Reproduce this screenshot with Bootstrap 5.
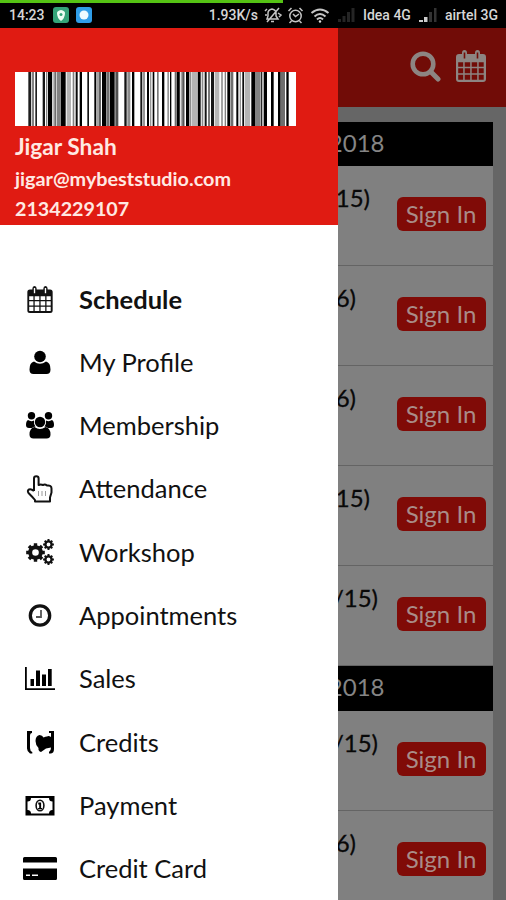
<!DOCTYPE html>
<html lang="en">
<head>
<meta charset="utf-8">
<meta name="viewport" content="width=device-width, initial-scale=1">
<title>Schedule</title>
<link href="https://cdn.jsdelivr.net/npm/bootstrap@5.3.0/dist/css/bootstrap.min.css" rel="stylesheet">
<style>
body{font-family:Lato,sans-serif;background:#666;color:#000}
.screen{width:506px;height:900px}
.status{height:28px;padding:2px 8px 3px 9px;font:500 14px/20px Roboto,sans-serif;color:#d6d6d6;border-top:3px solid #000;border-image:linear-gradient(90deg,#55c314 283px,#000 283px) 1;background:#000;white-space:nowrap}
.status svg{flex-shrink:0}
.drawer{width:338px}
.profile{height:197px;background:#e01b12;padding:44px 15px 0;color:#ffe9e2;font-weight:700}
.profile svg{display:block}
.person{font-size:22.7px;line-height:30px;margin-top:6px}
.mail{font-size:19.8px;line-height:31px;margin-top:1px}
.phone{font-size:19.7px;line-height:30px}
.entries{padding-top:42px}
.entry{height:63.3px;font-size:25.5px;color:#111}
.entry svg{width:40px;height:34px;margin:0 19.5px 0 19.5px}
.main-pane{width:168px}
.appbar{height:79px;background:#710c07;padding-right:20px;padding-bottom:3px;gap:15px}
.board{margin:15px 13px 0 0;height:778px}
.day{height:44.3px;background:#000;color:#858585;font-size:24px;padding-bottom:2px}
.slot{height:100px;background:#808080;border-bottom:1.5px solid #646464;padding:14px 7px 0 0}
.count{font-size:24px;line-height:35px;color:#080808;-webkit-text-stroke:.3px #080808}
.clip-start{display:flex;justify-content:flex-end;overflow:hidden;white-space:nowrap}
.w-day{width:46.5px}.w-a{width:32px}.w-b{width:18px}.w-c{width:40px}
.sign{width:89px;height:34px;margin-top:17px;padding:0 1px 1px 0;border:0;border-radius:6px;background:#800b07;color:#a98c88;font-size:24px;line-height:33px}
</style>
<script src="https://cdn.jsdelivr.net/npm/bootstrap@5.3.0/dist/js/bootstrap.bundle.min.js"></script>
</head>
<body>
<svg width="0" height="0" class="d-none">
<symbol id="cal" viewBox="0 0 30 32">
<path fill="currentColor" fill-rule="evenodd" d="M3 4h3V3q0-3 2.500-3T11 3v1h8V3q0-3 2.500-3T24 3v1h3q3 0 3 3v22q0 3-3 3H3q-3 0-3-3V7q0-3 3-3ZM2.200 12.200v4.500h5v-4.500Zm6.500 0v4.500h5.500v-4.500Zm7 0v4.500h5.500v-4.500Zm7 0v4.500h5v-4.500ZM2.200 18.200v5h5v-5Zm6.500 0v5h5.500v-5Zm7 0v5h5.500v-5Zm7 0v5h5v-5ZM2.200 24.700v5h5v-5Zm6.500 0v5h5.500v-5Zm7 0v5h5.500v-5Zm7 0v5h5v-5ZM7.700 2.500v6h1.600v-6Zm13 0v6h1.600v-6Z"/>
</symbol>
<symbol id="gear" viewBox="-10 -10 20 20">
<circle r="5.600" fill="none" stroke="currentColor" stroke-width="4.200"/>
<path stroke="currentColor" stroke-width="3.600" d="M0-9.800v4M0 5.800v4M-9.800 0h4M5.800 0h4M-6.900-6.900l3 3M3.900 3.900l3 3M-6.900 6.900l3-3M3.900-3.900l3-3"/>
</symbol>
</svg>
<div class="screen d-flex flex-column overflow-hidden">
  <div class="status d-flex align-items-center flex-shrink-0">
    <span>14:23</span>
    <svg class="ms-2" width="40" height="18" viewBox="0 0 40 18"><rect x="0" y="1" width="16" height="16" rx="3" fill="#35a479"/><path d="M8 4q4 1 4 3 0 5-4 8-4-3-4-8 0-2 4-3Z" fill="#effff4"/><circle cx="8" cy="8.500" r="1.500" fill="#35a479"/><rect x="23" y="1" width="16" height="16" rx="3" fill="#2f9de8"/><circle cx="31" cy="9" r="4.500" fill="#eefaff"/></svg>
    <span class="ms-auto">1.93K/s</span>
    <svg style="margin-left:6px" width="66" height="18" viewBox="0 0 66 18" fill="none" stroke="#c5c5c5" stroke-width="1.500"><path d="M3 13h11l-2-3V7q0-3-4-4-4 1-4 4v3Zm4 2.500h3M3 16 15 2M14 7l3 2-2 2M1 5l2-2M1 9h2"/><circle cx="31.500" cy="10" r="5.700"/><path d="m29 8 2.500 2.500L35 8M24.500 5l3-3m8 0 3 3m-11 10-2 2m10-2 2 2"/><g stroke-width="2"><path d="M47.500 7q8.500-7 17 0M50.500 10.500q5.500-5 11 0M53 13.500q3-3 6 0"/></g><circle cx="56" cy="15.500" r="1.200" fill="#ddd" stroke="none"/></svg>
    <svg class="ms-2" width="17" height="14" viewBox="0 0 17 14" fill="#252525"><path d="M0 14v-3h3v3Zm4.500 0V8h3v6ZM9 14V4h3v10Zm4.500 0V0h3v14Z"/></svg>
    <span class="ms-2">Idea 4G</span>
    <svg class="ms-2" width="18" height="14" viewBox="0 0 18 14"><path fill="#ccc" d="M0 14v-2h4v2Zm5 0V9h3.500v5Z"/><path fill="#333" d="M10 14V4h3v10Zm5 0V0h2.500v14Z"/></svg>
    <span class="ms-2">airtel 3G</span>
  </div>
  <div class="d-flex flex-grow-1">
    <aside class="drawer bg-white flex-shrink-0">
      <div class="profile">
        <svg id="barcode" width="281" height="54" viewBox="0 0 843 54" preserveAspectRatio="none"><rect width="843" height="54" fill="#fff"/></svg>
        <div class="person">Jigar Shah</div>
        <div class="mail">jigar@mybeststudio.com</div>
        <div class="phone">2134229107</div>
      </div>
      <nav class="entries">
        <div class="entry d-flex align-items-center fw-bold"><svg viewBox="0 0 40 34"><use href="#cal" x="7" y="4" width="26" height="27"/></svg>Schedule</div>
        <div class="entry d-flex align-items-center"><svg viewBox="0 0 40 34"><circle cx="20" cy="11.500" r="5.800"/><path d="M14 16.500q6 4.500 12 0 4.500 1 4.500 8 0 4.500-4 4.500h-13q-4 0-4-4.500 0-7 4.500-8Z"/></svg>My Profile</div>
        <div class="entry d-flex align-items-center"><svg viewBox="0 0 40 34"><circle cx="11.500" cy="7.800" r="3.700"/><circle cx="28.500" cy="7.800" r="3.700"/><path d="M8 12q3 2 6 .500-.500 4 1.500 6-2.500 0-3.500 1.500H9q-3 0-3-3 0-4 2-5ZM32 12q-3 2-6 .500.500 4-1.500 6 2.500 0 3.500 1.500h3q3 0 3-3 0-4-2-5Z"/><circle cx="20" cy="14" r="5.200"/><path d="M14.500 19q5.500 4 11 0 5 1 5 7.500 0 4-4 4h-13q-4 0-4-4 0-6.500 5-7.500Z"/></svg>Membership</div>
        <div class="entry d-flex align-items-center"><svg viewBox="0 0 40 34" fill="none" stroke="#111" stroke-width="2" stroke-linejoin="round"><path d="M14 19V6.500q0-2.200 2.300-2.200t2.300 2.200V13q2-1 4.400 0 2-1 4 .500 4.500-.500 4.500 3v4l-1.500 5v4H15v-1.500q-2-2.500-6.500-7-1.500-2.500.500-3.500t5 1.500"/><path stroke="#999" stroke-width="1" d="M18.500 19v5m3.500-5v5m3.500-5v5"/></svg>Attendance</div>
        <div class="entry d-flex align-items-center"><svg viewBox="0 0 40 34"><use href="#gear" x="6" y="8" width="19" height="19"/><use href="#gear" x="23" y="4" width="11" height="11"/><use href="#gear" x="23" y="19" width="11" height="11"/></svg>Workshop</div>
        <div class="entry d-flex align-items-center"><svg viewBox="0 0 40 34" fill="none"><circle cx="20" cy="17.500" r="9.700" stroke="#111" stroke-width="3.300"/><path d="M21 12v7h-5" stroke="#555" stroke-width="1.800"/></svg>Appointments</div>
        <div class="entry d-flex align-items-center"><svg viewBox="0 0 40 34"><path d="M5 6h1.800v21.200H35V29H5ZM10.500 18H14v7h-3.500Zm5.500-8.500h4V25h-4Zm6 4h4V25h-4Zm6-5.500h3.700v17H28Z"/></svg>Sales</div>
        <div class="entry d-flex align-items-center"><svg viewBox="0 0 40 34"><path d="M7 6h5v2q-2 0-2 3v12q0 3 2.300 4v1.500H10q-3-2-3-5ZM29 6h5v18q0 4-3 4.500h-2V27q2-1 2-4.500l-5 1-5 3.500q-3-1-2.500-4-3-3-3-7 0-5 4-6 3 0 4 2.500 2-1 3.500-1 1.500-1 4 .500V8h-2Z"/></svg>Credits</div>
        <div class="entry d-flex align-items-center"><svg viewBox="0 0 40 34"><path fill-rule="evenodd" d="M5.500 8h29v19.500h-29Zm5.500 2q0 3.500-3.500 3.500V22q3.500 0 3.500 3.500h18q0-3.500 3.500-3.500v-8.500q-3.500 0-3.500-3.500Z"/><ellipse cx="20" cy="17.500" rx="3.900" ry="5.300" fill="none" stroke="#111" stroke-width="1.600"/><path d="M18.300 14.500h2.800V20h1v1.300h-4V20h1.100v-3.500h-1Z"/></svg>Payment</div>
        <div class="entry d-flex align-items-center"><svg viewBox="0 0 40 34"><path fill-rule="evenodd" d="M4.500 6h31q1.500 0 1.500 1.500v4H3v-4Q3 6 4.500 6ZM3 17.500h34v10q0 1.500-1.500 1.500h-31Q3 29 3 27.500Zm3 6V25h4v-1.500Zm6 0V25h6v-1.500Z"/></svg>Credit Card</div>
      </nav>
    </aside>
    <main class="main-pane">
      <div class="appbar d-flex align-items-center justify-content-end">
        <svg width="31" height="31" viewBox="0 0 31 31" fill="none" stroke="#8d8582"><circle cx="13" cy="13" r="10.300" stroke-width="4.600"/><path d="m20.500 20.500 7.500 7.500" stroke-width="5" stroke-linecap="round"/></svg>
        <svg width="30" height="32" color="#8d8582"><use href="#cal" width="30" height="32"/></svg>
      </div>
      <div class="board overflow-hidden">
        <div class="day d-flex align-items-center"><div class="clip-start w-day">2018</div></div>
        <div class="slot d-flex justify-content-between"><div class="count clip-start w-a">15)</div><button class="btn sign">Sign In</button></div>
        <div class="slot d-flex justify-content-between"><div class="count clip-start w-b">6)</div><button class="btn sign">Sign In</button></div>
        <div class="slot d-flex justify-content-between"><div class="count clip-start w-b">6)</div><button class="btn sign">Sign In</button></div>
        <div class="slot d-flex justify-content-between"><div class="count clip-start w-a">15)</div><button class="btn sign">Sign In</button></div>
        <div class="slot d-flex justify-content-between"><div class="count clip-start w-c">/15)</div><button class="btn sign">Sign In</button></div>
        <div class="day d-flex align-items-center"><div class="clip-start w-day">2018</div></div>
        <div class="slot d-flex justify-content-between"><div class="count clip-start w-c">/15)</div><button class="btn sign">Sign In</button></div>
        <div class="slot d-flex justify-content-between"><div class="count clip-start w-b">6)</div><button class="btn sign">Sign In</button></div>
      </div>
    </main>
  </div>
</div>
<script>
// Barcode stripes as [start, width, grey level]
const bars=[[40,8,30],[50,7,130],[61,5,30],[83,7,20],[93,4,130],[99,12,0],[112,6,190],[118,6,110],[126,10,130],[137,15,0],[155,13,180],[173,5,130],[182,6,10],[194,7,0],[217,5,20],[238,6,0],[247,4,120],[253,4,20],[261,13,0],[275,7,110],[284,15,0],[301,9,80],[328,7,20],[337,9,140],[351,7,0],[376,5,20],[382,8,150],[396,6,0],[405,4,150],[413,5,0],[426,5,120],[441,7,0],[457,5,150],[465,4,0],[479,5,110],[490,6,160],[499,5,120],[505,3,0],[485,9,0],[513,10,0],[525,4,140],[531,15,180],[548,9,0],[560,5,140],[569,6,20],[579,6,120],[588,9,20],[599,14,180],[619,4,120],[629,4,130],[637,9,0],[648,7,110],[664,6,0],[674,4,150],[682,5,10],[689,16,180],[709,11,0],[720,17,130],[738,4,40],[746,10,0],[768,8,0],[789,8,0],[797,17,110],[814,11,0]];
const svg=document.getElementById('barcode');
for(const [x,w,g] of bars){const r=document.createElementNS('http://www.w3.org/2000/svg','rect');r.setAttribute('x',x);r.setAttribute('width',x>790?w-4:w);r.setAttribute('height',54);r.setAttribute('fill',`rgb(${g},${g},${g})`);svg.appendChild(r)}
</script>
</body>
</html>
